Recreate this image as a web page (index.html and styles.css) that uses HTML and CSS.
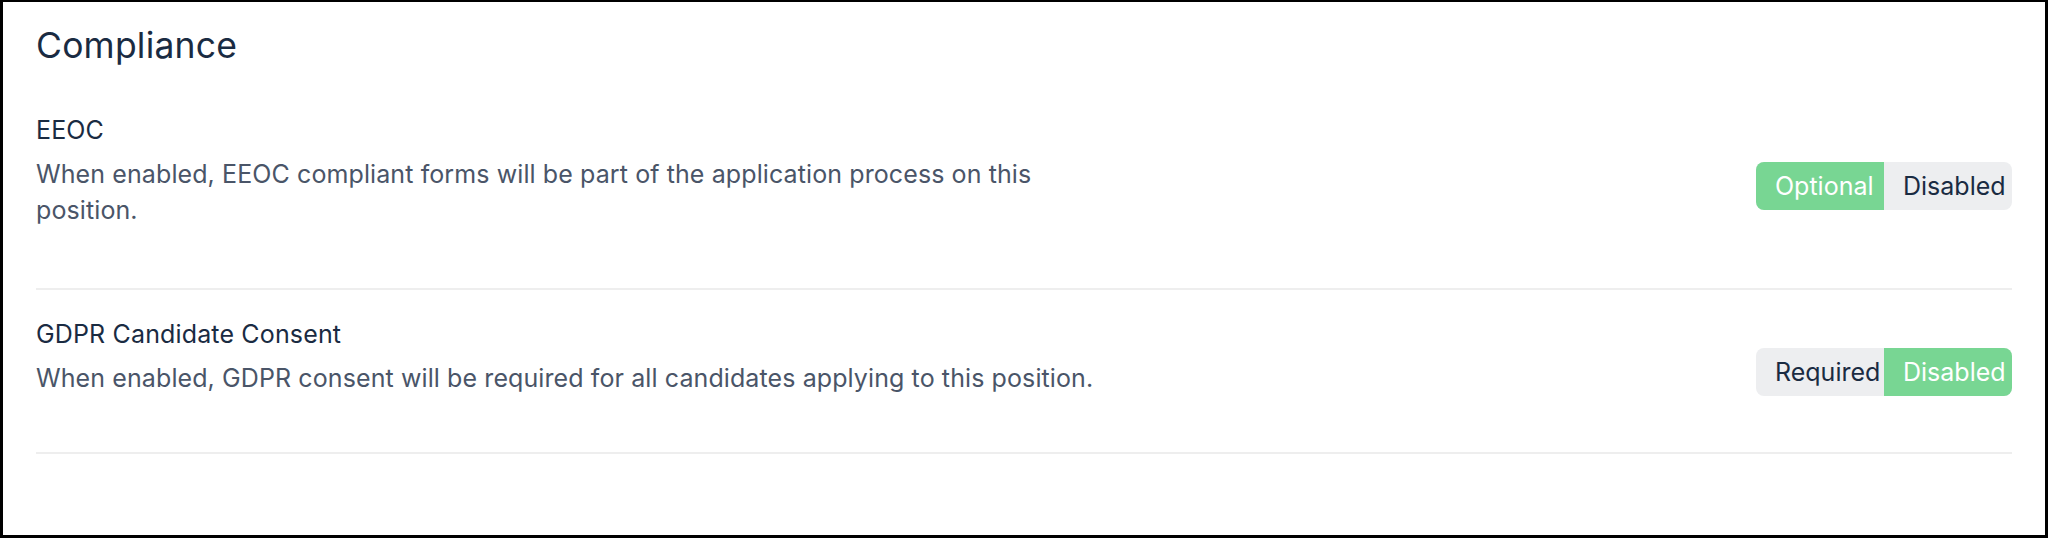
FILE: index.html
```html
<!DOCTYPE html>
<html lang="en">
<head>
<meta charset="utf-8">
<title>Compliance</title>
<link rel="stylesheet" href="styles.css">
</head>
<body>
<div class="frame">
  <h1 class="heading">Compliance</h1>
  <section class="setting">
    <h2 class="setting-title">EEOC</h2>
    <div class="setting-body">
      <p class="setting-desc">When enabled, EEOC compliant forms will be part of the application process on this position.</p>
      <div class="toggle">
        <span class="toggle-opt is-active">Optional</span>
        <span class="toggle-opt">Disabled</span>
      </div>
    </div>
  </section>
  <section class="setting">
    <h2 class="setting-title">GDPR Candidate Consent</h2>
    <div class="setting-body">
      <p class="setting-desc">When enabled, GDPR consent will be required for all candidates applying to this position.</p>
      <div class="toggle">
        <span class="toggle-opt">Required</span>
        <span class="toggle-opt is-active">Disabled</span>
      </div>
    </div>
  </section>
</div>
</body>
</html>
```
FILE: styles.css
```css
* { box-sizing: border-box; }
html, body { margin: 0; padding: 0; background: #fff; }
body { font-family: Inter, "Noto Sans", sans-serif; }
.frame {
  height: 538px;
  border: 3px solid #000;
  border-top-width: 2px;
  padding: 20px 33px 0 33px;
}
.heading {
  margin: 0 0 18px;
  font-size: 35.5px;
  line-height: 48px;
  font-weight: 400;
  color: #1a2b42;
  letter-spacing: 0.2px;
}
.setting {
  border-bottom: 2px solid #eeeeee;
  padding: 24px 0 60px;
}
.setting + .setting { padding: 26px 0 56px; }
.setting-title {
  margin: 0;
  font-size: 25px;
  line-height: 36px;
  font-weight: 400;
  color: #1a2b42;
  letter-spacing: 0.15px;
}
.setting-body {
  display: flex;
  align-items: center;
  justify-content: space-between;
  margin-top: 8px;
}
.setting-desc {
  margin: 0;
  max-width: 1100px;
  font-size: 25px;
  line-height: 36px;
  color: #4a5568;
  letter-spacing: 0.1px;
}
.toggle {
  display: flex;
  border-radius: 8px;
  overflow: hidden;
  background: #edeef0;
  margin-top: -12px;
}
.toggle-opt {
  width: 128px;
  height: 48px;
  padding-left: 19px;
  font-size: 25px;
  line-height: 48px;
  color: #1a2b42;
}
.toggle-opt.is-active {
  background: #78d693;
  color: #fff;
}
```
